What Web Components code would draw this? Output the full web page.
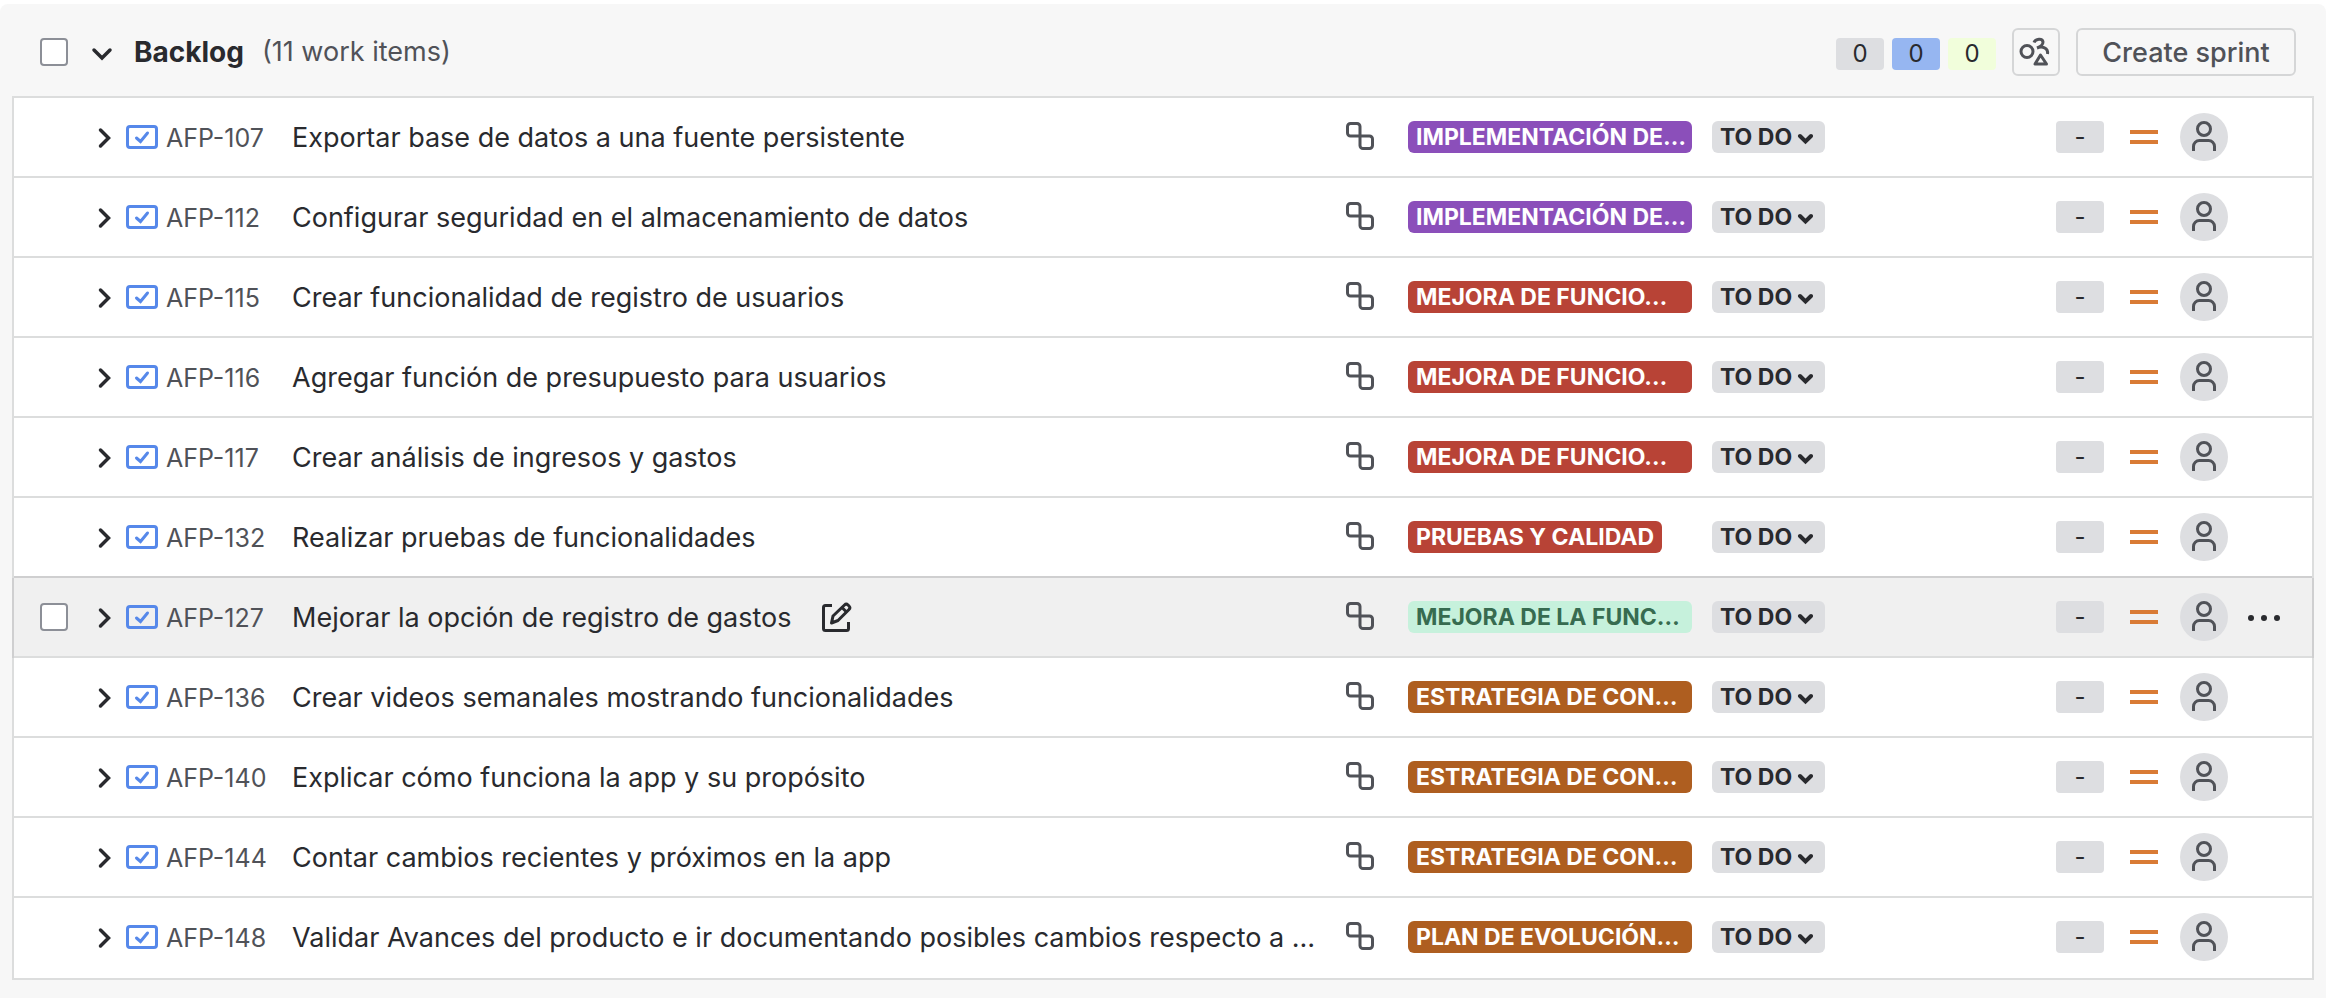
<!DOCTYPE html>
<html lang="es">
<head>
<meta charset="utf-8">
<title>Backlog</title>
<style>
body { margin: 0; padding-top: 4px; background: #fff; font-family: Inter, "Liberation Sans", sans-serif; font-size: 27px; color: #292a2e; }
</style>
</head>
<body>
<backlog-panel>
  <span slot="heading">Backlog</span>
  <span slot="count">(11 work items)</span>
  <count-badge slot="badges">0</count-badge>
  <count-badge slot="badges" tone="blue">0</count-badge>
  <count-badge slot="badges" tone="lime">0</count-badge>
  <backlog-item item-key="AFP-107" tone="purple">Exportar base de datos a una fuente persistente<span slot="epic">IMPLEMENTACIÓN DE…</span></backlog-item>
  <backlog-item item-key="AFP-112" tone="purple">Configurar seguridad en el almacenamiento de datos<span slot="epic">IMPLEMENTACIÓN DE…</span></backlog-item>
  <backlog-item item-key="AFP-115" tone="red">Crear funcionalidad de registro de usuarios<span slot="epic">MEJORA DE FUNCIO…</span></backlog-item>
  <backlog-item item-key="AFP-116" tone="red">Agregar función de presupuesto para usuarios<span slot="epic">MEJORA DE FUNCIO…</span></backlog-item>
  <backlog-item item-key="AFP-117" tone="red">Crear análisis de ingresos y gastos<span slot="epic">MEJORA DE FUNCIO…</span></backlog-item>
  <backlog-item item-key="AFP-132" tone="red" fit>Realizar pruebas de funcionalidades<span slot="epic">PRUEBAS Y CALIDAD</span></backlog-item>
  <backlog-item item-key="AFP-127" tone="green" active>Mejorar la opción de registro de gastos<span slot="epic">MEJORA DE LA FUNC…</span></backlog-item>
  <backlog-item item-key="AFP-136" tone="orange">Crear videos semanales mostrando funcionalidades<span slot="epic">ESTRATEGIA DE CON…</span></backlog-item>
  <backlog-item item-key="AFP-140" tone="orange">Explicar cómo funciona la app y su propósito<span slot="epic">ESTRATEGIA DE CON…</span></backlog-item>
  <backlog-item item-key="AFP-144" tone="orange">Contar cambios recientes y próximos en la app<span slot="epic">ESTRATEGIA DE CON…</span></backlog-item>
  <backlog-item item-key="AFP-148" tone="orange">Validar Avances del producto e ir documentando posibles cambios respecto a …<span slot="epic">PLAN DE EVOLUCIÓN…</span></backlog-item>
</backlog-panel>

<script>
const RESET = `
  *, :host { box-sizing: border-box; }
  button, select { font: inherit; color: inherit; margin: 0; padding: 0; border: 0; background: none; appearance: none; cursor: pointer; }
  svg { display: block; }
`;

class CheckBox extends HTMLElement {
  constructor() {
    super();
    this.attachShadow({ mode: 'open' }).innerHTML = `<style>${RESET}
      :host { display: block; width: 28px; height: 28px; }
      input { display: block; appearance: none; width: 28px; height: 28px; margin: 0; border: 2px solid #8c8f97; border-radius: 4px; background: #fff; }
      input:checked { background: #1868db; }
    </style><input type="checkbox">`;
  }
  connectedCallback() {
    this.shadowRoot.querySelector('input').setAttribute('aria-label', this.getAttribute('label') || '');
  }
}

class CountBadge extends HTMLElement {
  constructor() {
    super();
    this.attachShadow({ mode: 'open' }).innerHTML = `<style>${RESET}
      :host { display: block; width: 48px; height: 32px; border-radius: 4px; background: #dddee1; font-size: 24px; line-height: 32px; text-align: center; }
      :host([tone="blue"]) { background: #96b6f1; }
      :host([tone="lime"]) { background: #f1fedb; }
    </style><slot></slot>`;
  }
}

class BacklogItem extends HTMLElement {
  constructor() {
    super();
    this.attachShadow({ mode: 'open' }).innerHTML = `<style>${RESET}
      :host { display: grid; grid-template-columns: 72px 40px 32px 134px minmax(0, 1fr) 62px 304px 344px 48px 26px 28px 22px 48px 84px;
        align-items: center; height: 80px; border-bottom: 2px solid #dcdddd; background: #fff; }
      :host([active]) { background: #f0f0f0; box-shadow: 0 -2px #cfcfd0, -2px 0 #cfcfd0, 2px 0 #cfcfd0; }
      :host(:last-of-type) { border-color: transparent; }
      .pick { padding-left: 26px; visibility: hidden; }
      .tools { visibility: hidden; }
      :host([active]) .pick, :host([active]) .tools { visibility: visible; }
      .expand { justify-self: start; margin-left: 8px; }
      a { color: #505258; font-size: 25px; line-height: 32px; text-decoration: none; padding: 2px 0 0 8px; }
      .title { display: flex; align-items: center; gap: 28px; line-height: 40px; white-space: nowrap; }
      .title span { padding-top: 2px; }
      .link { margin-bottom: 2px; }
      .epic { justify-self: start; width: 284px; height: 32px; padding: 0 8px; border-radius: 6px; color: #fff; font-size: 23px; font-weight: 700; line-height: 32px; white-space: nowrap; }
      :host([fit]) .epic { width: auto; }
      :host([tone="purple"]) .epic { background: #8b4fba; }
      :host([tone="red"]) .epic { background: #b84336; }
      :host([tone="orange"]) .epic { background: #ae5e20; }
      :host([tone="green"]) .epic { background: #c6f1dc; color: #376b50; }
      .status { display: grid; width: 113px; height: 32px; border-radius: 6px; background: #dddee1; }
      .status > * { grid-area: 1 / 1; }
      .status select { width: 100%; height: 32px; padding-left: 8px; font-size: 23px; font-weight: 700; line-height: 32px; }
      .status svg { align-self: center; justify-self: end; margin: 4px 12px 0 0; pointer-events: none; }
      .priority { grid-column: 11; }
      .avatar { grid-column: 13; width: 48px; height: 48px; border-radius: 50%; background: #dddee1; }
      .tools { grid-column: 14; padding-left: 18px; }
    </style>
    <check-box class="pick" label="Select work item"></check-box>
    <button class="expand" aria-label="Expand"><svg width="24" height="24" viewBox="0 0 24 24" fill="none" stroke="#292a2e" stroke-width="3.500" stroke-linecap="round"><path d="m6.500 5 8 8-8 8"/></svg></button>
    <svg width="32" height="24" viewBox="0 0 32 24" fill="none" stroke="#5688ea" stroke-width="3"><rect x="1.500" y="1.500" width="29" height="21" rx="2.500"/><path d="m10.500 13 4 3.500L21.500 8" stroke-linecap="round"/></svg>
    <a href="#"></a>
    <div class="title"><span><slot></slot></span></div>
    <svg class="link" width="28" height="28" viewBox="0 0 28 28" fill="none" stroke="#505258" stroke-width="3"><path d="M14 14H4.500a3 3 0 0 1-3-3V4.500a3 3 0 0 1 3-3H11a3 3 0 0 1 3 3V23.500a3 3 0 0 0 3 3h6.500a3 3 0 0 0 3-3V17a3 3 0 0 0-3-3Z"/></svg>
    <div class="epic"><slot name="epic"></slot></div>
    <div class="status"><select aria-label="Status"><option>TO DO</option></select><svg width="16" height="12" viewBox="0 0 16 12" fill="none" stroke="#292a2e" stroke-width="4" stroke-linecap="round"><path d="m3 3 5.500 5.500L14 3"/></svg></div>
    <count-badge>-</count-badge>
    <svg class="priority" width="28" height="16" viewBox="0 0 28 16" fill="#d97b35"><path d="M0 1h28v4H0zM0 11h28v4H0z"/></svg>
    <svg class="avatar" viewBox="0 0 48 48" fill="none" stroke="#505258" stroke-width="3"><circle cx="24" cy="16" r="6.500"/><path d="M13.500 38v-4.500a6 6 0 0 1 6-6h9a6 6 0 0 1 6 6V38"/></svg>
    <button class="tools" aria-label="More actions"><svg width="38" height="8" viewBox="0 0 38 8" fill="#292a2e"><circle cx="5" cy="5" r="3"/><circle cx="18" cy="5" r="3"/><circle cx="31" cy="5" r="3"/></svg></button>`;
  }
  connectedCallback() {
    this.setAttribute('role', 'listitem');
    this.shadowRoot.querySelector('a').textContent = this.getAttribute('item-key');
    if (this.hasAttribute('active')) {
      const edit = document.createElement('button');
      edit.setAttribute('aria-label', 'Edit summary');
      edit.innerHTML = `<svg width="32" height="32" viewBox="0 0 32 32" fill="none" stroke="#292a2e" stroke-width="3"><path d="M12 4.500H5.500a2 2 0 0 0-2 2v21a2 2 0 0 0 2 2h21a2 2 0 0 0 2-2V21"/><path d="m11.500 22 1.500-7L24.500 4a2.500 2.500 0 0 1 3.500 0l1 1a2.500 2.500 0 0 1 0 3.500L18 19.500Z" stroke-linejoin="round"/><path d="m22 6.500 4.500 4.500"/></svg>`;
      this.shadowRoot.querySelector('.title').append(edit);
    }
  }
}

class BacklogPanel extends HTMLElement {
  constructor() {
    super();
    this.attachShadow({ mode: 'open' }).innerHTML = `<style>${RESET}
      :host { display: block; min-height: calc(100vh - 4px); padding: 24px 12px 18px; border-radius: 8px 8px 0 0; background: #f7f7f7; }
      header { display: flex; align-items: center; height: 48px; margin-bottom: 20px; padding: 0 18px 0 28px; }
      .toggle { margin: 0 20px 0 22px; }
      h2 { margin: 0 18px 0 0; font-size: 28px; font-weight: 700; line-height: 40px; }
      .count { flex: 1; color: #505258; line-height: 40px; }
      .badges { display: flex; gap: 8px; margin: 4px 16px 0 0; }
      .box { height: 48px; border: 2px solid #d5d6d7; border-radius: 6px; color: #505258; font-weight: 500; }
      .icon { width: 48px; margin-right: 16px; }
      .create { width: 220px; }
      .list { border: 2px solid #dcdddd; border-bottom: 0; box-shadow: 0 2px #dcdddd; }
    </style>
    <header>
      <check-box label="Select all"></check-box>
      <button class="toggle" aria-label="Collapse"><svg width="24" height="24" viewBox="0 0 24 24" fill="none" stroke="#292a2e" stroke-width="3.500" stroke-linecap="round"><path d="m4 10 8 8 8-8"/></svg></button>
      <h2><slot name="heading"></slot></h2>
      <div class="count"><slot name="count"></slot></div>
      <div class="badges"><slot name="badges"></slot></div>
      <button class="box icon" aria-label="Group"><svg width="44" height="44" viewBox="0 0 44 44" fill="none" stroke="#505258" stroke-width="3"><circle cx="13" cy="21.500" r="6"/><path d="M20 12.500c1.500-4 8.500-4.500 9-.5.200 2.500-3 5-6 6 5-2 11.500-.500 10.500 6"/><path d="M26.500 25 21 34h11.500Z" stroke-linejoin="round"/></svg></button>
      <button class="box create">Create sprint</button>
    </header>
    <div class="list" role="list"><slot></slot></div>`;
  }
}

customElements.define('check-box', CheckBox);
customElements.define('count-badge', CountBadge);
customElements.define('backlog-item', BacklogItem);
customElements.define('backlog-panel', BacklogPanel);
</script>
</body>
</html>
